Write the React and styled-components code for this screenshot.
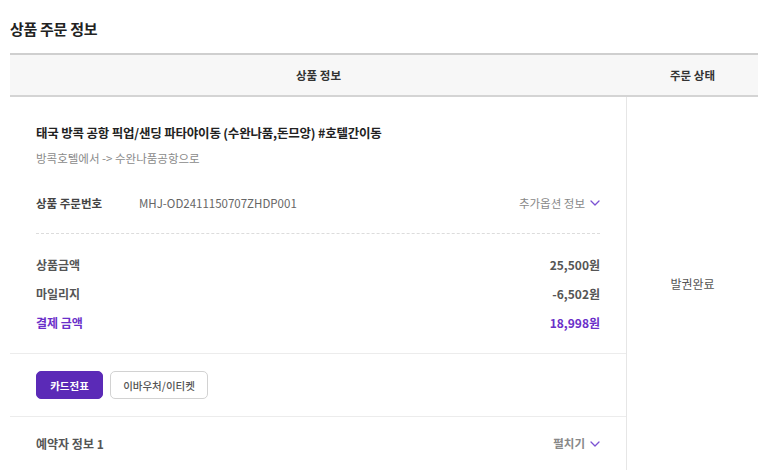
import React from "react";
import styled, { createGlobalStyle } from "styled-components";

const GlobalStyle = createGlobalStyle`
  html, body {
    margin: 0;
    padding: 0;
    background: #fff;
    font-family: "Noto Sans CJK KR", "Noto Sans", sans-serif;
  }
`;

const Page = styled.div`
  padding: 18px 15px 0 10px;
`;

const Title = styled.h2`
  margin: 0 0 14px;
  font-size: 15px;
  font-weight: 700;
  color: #222;
  line-height: 21px;
  letter-spacing: -0.3px;
`;

const Table = styled.div`
  border-top: 2px solid #cfcfcf;
`;

const HeadRow = styled.div`
  display: grid;
  grid-template-columns: 617px 1fr;
  height: 40px;
  background: #f7f7f7;
  border-bottom: 2px solid #d4d4d4;
`;

const HeadCell = styled.div`
  display: flex;
  align-items: center;
  justify-content: center;
  font-size: 11.5px;
  font-weight: 700;
  color: #333;
`;

const BodyRow = styled.div`
  display: grid;
  grid-template-columns: 617px 1fr;
`;

const Info = styled.div`
  border-right: 1px solid #e6e6e6;
`;

const Status = styled.div`
  display: flex;
  justify-content: center;
  align-items: flex-start;
  padding-top: 178px;
  font-size: 12px;
  line-height: 17px;
  color: #555;
`;

const Section = styled.div`
  padding: ${(p) => p.$pad || "0 26px"};
  border-bottom: ${(p) => (p.$line ? "1px solid #ececec" : "none")};
`;

const ProductName = styled.div`
  font-size: 12.5px;
  font-weight: 700;
  color: #222;
  line-height: 18px;
  letter-spacing: -0.2px;
`;

const Route = styled.div`
  margin-top: 8px;
  font-size: 11.5px;
  color: #8a8a8a;
  line-height: 16px;
`;

const OrderRow = styled.div`
  display: flex;
  align-items: center;
  margin-top: 29px;
  padding-bottom: 22px;
  border-bottom: 1px dashed #dcdcdc;
  font-size: 11.5px;
  line-height: 16px;
`;

const OrderLabel = styled.span`
  width: 103px;
  font-weight: 700;
  color: #444;
`;

const OrderNo = styled.span`
  color: #666;
  flex: 1;
`;

const Toggle = styled.span`
  display: inline-flex;
  align-items: center;
  gap: 5px;
  color: #888;
  font-weight: ${(p) => (p.$bold ? 700 : 400)};
  font-size: 11.5px;
`;

const Prices = styled.div`
  padding-top: 22px;
  display: flex;
  flex-direction: column;
  gap: 12px;
`;

const PriceRow = styled.div`
  display: flex;
  justify-content: space-between;
  font-size: 12px;
  font-weight: 700;
  line-height: 17px;
  color: ${(p) => (p.$accent ? "#6a2fc9" : "#555")};
`;

const Buttons = styled.div`
  display: flex;
  gap: 7px;
`;

const Button = styled.button`
  height: 28px;
  width: ${(p) => p.$w}px;
  padding: 0;
  border-radius: 5px;
  border: 1px solid ${(p) => (p.$primary ? "#5b2ab7" : "#d2d2d2")};
  background: ${(p) => (p.$primary ? "#5b2ab7" : "#fff")};
  color: ${(p) => (p.$primary ? "#fff" : "#555")};
  font-family: inherit;
  font-size: 10.5px;
  font-weight: ${(p) => (p.$primary ? 700 : 500)};
`;

const Booker = styled.div`
  display: flex;
  justify-content: space-between;
  align-items: center;
  font-size: 12px;
  line-height: 17px;
`;

const BookerLabel = styled.span`
  font-weight: 700;
  color: #555;
`;

const Chevron = () => (
  <svg width="10" height="6" viewBox="0 0 10 6" fill="none">
    <path d="M1 1l4 4 4-4" stroke="#7b52d3" strokeWidth="1.3" strokeLinecap="round" strokeLinejoin="round" />
  </svg>
);

export default function App() {
  return (
    <>
      <GlobalStyle />
      <Page>
        <Title>상품 주문 정보</Title>
        <Table>
          <HeadRow>
            <HeadCell>상품 정보</HeadCell>
            <HeadCell>주문 상태</HeadCell>
          </HeadRow>
          <BodyRow>
            <Info>
              <Section $pad="27px 26px 0">
                <ProductName>태국 방콕 공항 픽업/샌딩 파타야이동 (수완나품,돈므앙) #호텔간이동</ProductName>
                <Route>방콕호텔에서 -&gt; 수완나품공항으로</Route>
                <OrderRow>
                  <OrderLabel>상품 주문번호</OrderLabel>
                  <OrderNo>MHJ-OD2411150707ZHDP001</OrderNo>
                  <Toggle>
                    추가옵션 정보 <Chevron />
                  </Toggle>
                </OrderRow>
              </Section>
              <Section $pad="0 26px 22px" $line>
                <Prices>
                  <PriceRow>
                    <span>상품금액</span>
                    <span>25,500원</span>
                  </PriceRow>
                  <PriceRow>
                    <span>마일리지</span>
                    <span>-6,502원</span>
                  </PriceRow>
                  <PriceRow $accent>
                    <span>결제 금액</span>
                    <span>18,998원</span>
                  </PriceRow>
                </Prices>
              </Section>
              <Section $pad="17px 26px 17px" $line>
                <Buttons>
                  <Button $primary $w={67}>카드전표</Button>
                  <Button $w={98}>이바우처/이티켓</Button>
                </Buttons>
              </Section>
              <Section $pad="18px 26px 20px">
                <Booker>
                  <BookerLabel>예약자 정보 1</BookerLabel>
                  <Toggle $bold>
                    펼치기 <Chevron />
                  </Toggle>
                </Booker>
              </Section>
            </Info>
            <Status>발권완료</Status>
          </BodyRow>
        </Table>
      </Page>
    </>
  );
}
